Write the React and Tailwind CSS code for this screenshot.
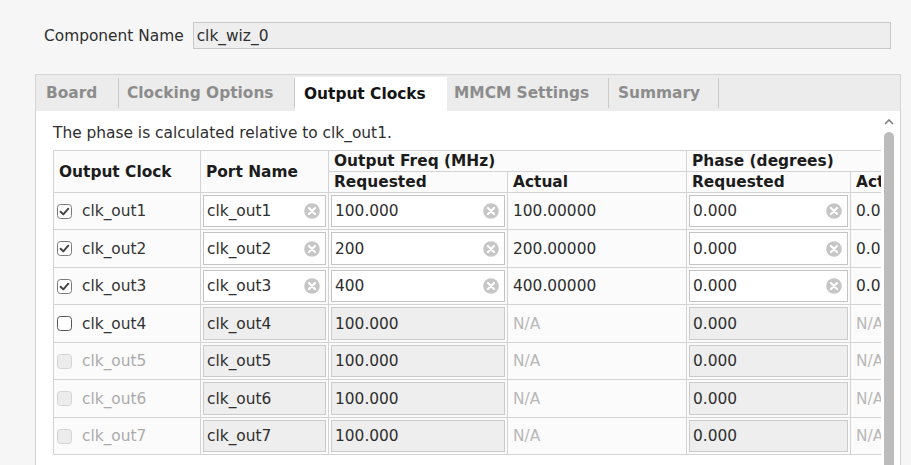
import React from 'react'

const TABS = [
  { label: 'Board', w: 'w-[82px]', pl: 'pl-[10px]', sep: true },
  { label: 'Clocking Options', w: 'w-[175px]', pl: 'pl-[8px]', sep: true },
  { label: 'Output Clocks', w: 'w-[152px]', pl: 'pl-[9px]', active: true },
  { label: 'MMCM Settings', w: 'w-[161px]', pl: 'pl-[7px]', sep: true },
  { label: 'Summary', w: 'w-[109px]', pl: 'pl-[9px]', sep: true },
]

const ROWS = [
  { name: 'clk_out1', on: true, enabled: true, freq: '100.000', actual: '100.00000', phase: '0.000', act: '0.000' },
  { name: 'clk_out2', on: true, enabled: true, freq: '200', actual: '200.00000', phase: '0.000', act: '0.000' },
  { name: 'clk_out3', on: true, enabled: true, freq: '400', actual: '400.00000', phase: '0.000', act: '0.000' },
  { name: 'clk_out4', on: false, enabled: true, freq: '100.000', actual: 'N/A', phase: '0.000', act: 'N/A' },
  { name: 'clk_out5', on: false, enabled: false, freq: '100.000', actual: 'N/A', phase: '0.000', act: 'N/A' },
  { name: 'clk_out6', on: false, enabled: false, freq: '100.000', actual: 'N/A', phase: '0.000', act: 'N/A' },
  { name: 'clk_out7', on: false, enabled: false, freq: '100.000', actual: 'N/A', phase: '0.000', act: 'N/A' },
]

function ClearIcon() {
  return (
    <svg width="16" height="16" viewBox="0 0 16 16" className="shrink-0">
      <circle cx="8" cy="8" r="7.8" fill="#c6c6c6" />
      <path d="M5 5 L11 11 M11 5 L5 11" stroke="#fff" strokeWidth="2.2" strokeLinecap="round" />
    </svg>
  )
}

function CheckBox({ on, enabled }) {
  if (!enabled) {
    return (
      <svg width="15" height="15" viewBox="0 0 15 15" className="shrink-0">
        <rect x="0.5" y="0.5" width="14" height="14" rx="3" fill="#ececec" stroke="#d4d4d4" />
      </svg>
    )
  }
  return (
    <svg width="15" height="15" viewBox="0 0 15 15" className="shrink-0">
      <rect x="0.5" y="0.5" width="14" height="14" rx="3" fill="#fff" stroke={on ? '#7a7a7a' : '#555'} />
      {on && (
        <path d="M3.6 7.8 L6.3 10.4 L11.3 4.7" fill="none" stroke="#454545" strokeWidth="2" strokeLinecap="round" strokeLinejoin="round" />
      )}
    </svg>
  )
}

function Field({ value, editable }) {
  return (
    <div className="p-[2px] bg-[#fbfbfb]">
      <div
        className={
          editable
            ? 'h-full flex items-center justify-between pl-[3px] pr-[5px] bg-white border border-[#c4c4c4]'
            : 'h-full flex items-center pl-[3px] bg-[#eeeeee] border border-[#cacaca]'
        }
      >
        <span>{value}</span>
        {editable && <ClearIcon />}
      </div>
    </div>
  )
}

function Plain({ value }) {
  return (
    <div className={'flex items-center pl-[5px] bg-[#fbfbfb] ' + (value === 'N/A' ? 'text-[#b8b8b8]' : '')}>
      {value}
    </div>
  )
}

function Head({ children, span }) {
  return <div className={'flex items-center pl-[5px] bg-[#fbfbfb] font-bold text-[#1c1c1c] ' + (span || '')}>{children}</div>
}

export default function App() {
  return (
    <div className="w-[911px] h-[465px] overflow-hidden bg-[#f6f6f6] font-['DejaVu_Sans',sans-serif] text-[15.4px] leading-[18px] text-[#2e2e2e]">
      {/* component name */}
      <div className="flex items-center pt-[22px] pl-[44px]">
        <span>Component Name</span>
        <div className="ml-[9px] flex-1 mr-[20px] h-[27px] flex items-center pl-[3px] bg-[#eeeeee] border border-[#c8c8c8]">
          clk_wiz_0
        </div>
      </div>

      {/* tab panel */}
      <div className="ml-[35px] mt-[25px] w-[866px] h-[391px] flex flex-col border-x border-t border-[#d4d4d4]">
        <div className="h-[36px] flex bg-[#ececec] shrink-0">
          {TABS.map((t) => (
            <React.Fragment key={t.label}>
              <div
                className={
                  t.w + ' ' + t.pl + ' flex items-center font-bold ' +
                  (t.active ? 'bg-white text-[#141414] mt-[2px]' : 'text-[#8c8c8c]')
                }
              >
                {t.label}
              </div>
              {t.sep && <div className="w-px my-[3px] bg-[#c9c9c9]" />}
            </React.Fragment>
          ))}
        </div>

        <div className="flex-1 flex bg-white min-h-0">
          <div className="w-[845px] pl-[17px] pt-[13px]">
            <p>The phase is calculated relative to clk_out1.</p>
            <div className="mt-[8px] w-[828px] overflow-hidden">
              <div className="w-max grid grid-cols-[146px_127px_178px_178px_163px_80px] grid-rows-[20px_20px_36px_37px_36px_37px_36px_37px_36px] gap-px p-px bg-[#d3d3d3]">
                <Head span="row-span-2">Output Clock</Head>
                <Head span="row-span-2">Port Name</Head>
                <Head span="col-span-2">Output Freq (MHz)</Head>
                <Head span="col-span-2">Phase (degrees)</Head>
                <Head>Requested</Head>
                <Head>Actual</Head>
                <Head>Requested</Head>
                <Head>Actual</Head>
                {ROWS.map((r) => (
                  <React.Fragment key={r.name}>
                    <div className="flex items-center pl-[3px] gap-[10px] bg-[#fbfbfb]">
                      <CheckBox on={r.on} enabled={r.enabled} />
                      <span className={r.enabled ? 'text-[#333]' : 'text-[#ababab]'}>{r.name}</span>
                    </div>
                    <Field value={r.name} editable={r.on} />
                    <Field value={r.freq} editable={r.on} />
                    <Plain value={r.actual} />
                    <Field value={r.phase} editable={r.on} />
                    <Plain value={r.act} />
                  </React.Fragment>
                ))}
              </div>
            </div>
          </div>

          {/* scrollbar */}
          <div className="w-[19px] flex flex-col">
            <div className="h-[21px] shrink-0 flex items-center pl-[3px]">
              <svg width="10" height="6" viewBox="0 0 10 6" className="block">
                <polyline points="1,5 5,1 9,5" fill="none" stroke="#7e7e7e" strokeWidth="1.6" />
              </svg>
            </div>
            <div className="ml-[3px] w-[10px] flex-1 rounded-t-[5px] bg-[#bcbcbc]" />
          </div>
        </div>
      </div>
    </div>
  )
}
